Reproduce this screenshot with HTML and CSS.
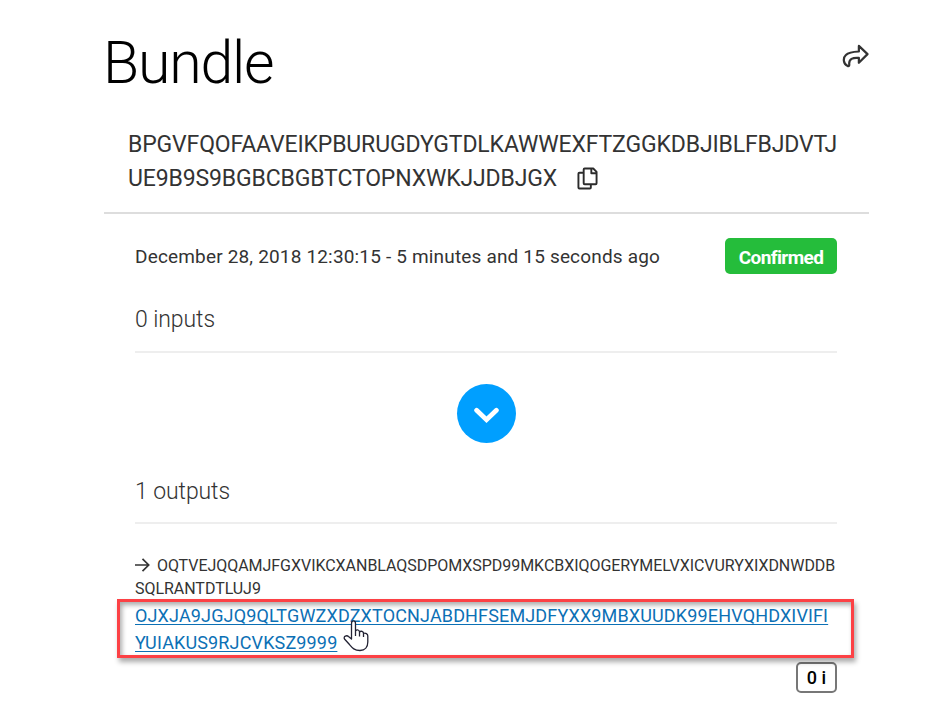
FILE: index.html
```html
<!DOCTYPE html>
<html lang="en">
<head><meta charset="utf-8"><title>Bundle</title><link rel="stylesheet" href="styles.css"></head>
<body>
<main class="page">
<header class="head"><h1>Bundle</h1>
<svg class="share" viewBox="0 0 28 26" fill="none" stroke="#333" stroke-width="2.3" stroke-linejoin="round"><path d="M17.500 2 L26.500 10.500 L17.500 19.500 V14.500 C11 14 7 15.500 7.500 21 Q7.700 23.500 6 23 C1 20.500 .8 14.500 4 11.500 C7 8.300 12 8 17.500 7.800 Z"/></svg></header>
<section class="hash"><div>BPGVFQOFAAVEIKPBURUGDYGTDLKAWWEXFTZGGKDBJIBLFBJDVTJ</div><div class="row"><span>UE9B9S9BGBCBGBTCTOPNXWKJJDBJGX</span><svg class="copy" viewBox="0 0 22 24" fill="none" stroke="#2b2b2b" stroke-width="2" stroke-linejoin="round"><path d="M8 1.500h9l3.500 3.500v12q0 1-1 1H8q-1 0-1-1V2.500q0-1 1-1zM15 1.500v5h5.500M7 6H2.500q-1 0-1 1v14.500q0 1 1 1h11q1 0 1-1V18"/></svg></div></section>
<section class="body">
<div class="status"><span class="date">December 28, 2018 12:30:15 - 5 minutes and 15 seconds ago</span><span class="badge">Confirmed</span></div>
<h2 class="inputs">0 inputs</h2>
<div class="circle"><svg viewBox="0 0 28 18" fill="none" stroke="#fff" stroke-width="5" stroke-linecap="round"><path d="M3.500 3.500L14 13.500L24.500 3.500"/></svg></div>
<h2 class="outputs">1 outputs</h2>
<div class="tx"><div class="row"><svg class="arrow" viewBox="0 0 16 14" fill="none" stroke="#333" stroke-width="1.700"><path d="M0 7h14M7.500 .8l6.200 6.200-6.200 6.200"/></svg><span>OQTVEJQQAMJFGXVIKCXANBLAQSDPOMXSPD99MKCBXIQOGERYMELVXICVURYXIXDNWDDB</span></div><div>SQLRANTDTLUJ9</div></div>
<div class="link"><a href="#">OJXJA9JGJQ9QLTGWZXDZXTOCNJABDHFSEMJDFYXX9MBXUUDK99EHVQHDXIVIFI<br>YUIAKUS9RJCVKSZ9999</a>
<svg class="pointer" viewBox="0 0 26 33" fill="#fff" stroke="#222233" stroke-width="1.300" stroke-linejoin="round"><path d="M8.500 20V4.500C8.500 1 12.500 1 12.500 4.500V12C14 10 16.500 11 16.500 13C18 11.500 20.500 12.500 20.500 14.500C22.500 13.500 24.800 15 24.800 17V23C24.800 28 22 31.500 17 31.500C11 31.500 9 28.500 6 25L1.500 20C0 17 4 16 5.500 17.500ZM12.500 12V17M16.500 13V17.500M20.500 14.500V18"/></svg></div>
<div class="value">0 i</div>
</section>
</main>
</body>
</html>
```
FILE: styles.css
```css
body{margin:0;background:#fff;font-family:Roboto,sans-serif;color:#333;white-space:nowrap}
.page{width:765px;margin-left:104px}
.head{height:126px;display:flex;justify-content:space-between}
h1{font-size:59px;font-weight:300;letter-spacing:-1.2px;margin:27px 0 0 -1px;line-height:72px;color:#000}
.share{width:27px;height:25px;margin-top:44px}
.hash{height:84px;padding:2px 0 0 24px;font-size:23px;letter-spacing:-.14px;line-height:34px;border-bottom:2px solid #ddd}
.row{display:flex;align-items:center}
.copy{width:21px;height:23px;margin:-2px 0 0 20px}
.body{width:702px;margin-left:31px}
.status{padding-top:24px;display:flex;justify-content:space-between;align-items:center}
.date{font-size:19px;letter-spacing:.17px}
.badge{width:112px;height:36px;border-radius:5px;background:#25bd3b;color:#fff;font-size:19px;letter-spacing:-.6px;font-weight:700;text-align:center;line-height:39px}
h2{font-size:23px;font-weight:300;letter-spacing:-.08px;margin:0;border-bottom:2px solid #eee}
.inputs{height:60px;margin-top:17px;line-height:58px}
.circle{width:59px;height:59px;border-radius:50%;background:#009fff;margin:31px 0 0 321.500px;display:flex;align-items:center;justify-content:center}
.circle svg{width:27px;height:17px;margin-top:4px}
.outputs{height:59px;margin-top:20px;line-height:57px}
.tx{padding-top:30px;font-size:16px;letter-spacing:-.04px;line-height:23px}
.arrow{width:16px;height:14px;margin:-2px 6px 0 0}
.link{position:relative;box-sizing:border-box;width:737px;height:59px;margin:-1px 0 0 -18px;border:3px solid #fc4145;padding:0 15px;font-size:18px;letter-spacing:.145px;line-height:27px;box-shadow:2px 4px 5px #0005,inset 2px 3px 5px #0005}
.link a{color:#0c70b5;text-decoration-thickness:1px;text-underline-offset:2px}
.pointer{position:absolute;left:223px;top:17px;width:26px;height:33px}
.value{box-sizing:border-box;width:41px;height:31px;margin:4px 0 0 auto;border:2px solid #777;border-radius:5px;text-align:center;font-size:18px;font-weight:500;line-height:27px;color:#000}
```
